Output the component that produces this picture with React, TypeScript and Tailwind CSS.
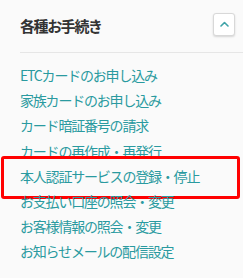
import React from 'react'

const links = [
  'ETCカードのお申し込み',
  '家族カードのお申し込み',
  'カード暗証番号の請求',
  'カードの再作成・再発行',
  '本人認証サービスの登録・停止',
  'お支払い口座の照会・変更',
  'お客様情報の照会・変更',
  'お知らせメールの配信設定',
]

export default function App() {
  return (
    <div
      className="w-[243px] h-[278px] bg-[#fafafa] overflow-hidden"
      style={{ fontFamily: '"Noto Sans CJK JP", "Noto Sans", sans-serif' }}
    >
      <div className="pl-5">
        <div className="h-[53px] flex items-center justify-between pr-[8px] border-b border-[#e6e6e6]">
          <h2 className="text-[15px] font-bold text-[#333] tracking-[-1.4px]">各種お手続き</h2>
          <button className="w-[22px] h-[23px] -mt-[4px] rounded-[3px] bg-white border border-[#d8d8d8] shadow-[0_1px_2px_rgba(0,0,0,0.15)] flex items-center justify-center">
            <svg width="9" height="6" viewBox="0 0 9 6" fill="none">
              <path d="M1 5 L4.5 1.5 L8 5" stroke="#3fa3a8" strokeWidth="1.6" strokeLinecap="round" strokeLinejoin="round" />
            </svg>
          </button>
        </div>
        <ul className="pt-[10px]">
          {links.map((l, i) => (
            <li key={l} className="relative h-[25.2px] leading-[25.2px] text-[14px] text-[#2a9aa0] tracking-[-1.2px] whitespace-nowrap">
              <a href="#">{l}</a>
              {i === 4 && (
                <span className="absolute left-[-19px] top-[-8px] w-[239px] h-[43px] border-[3px] border-[#ff0000] rounded-[3px]" />
              )}
            </li>
          ))}
        </ul>
      </div>
    </div>
  )
}
